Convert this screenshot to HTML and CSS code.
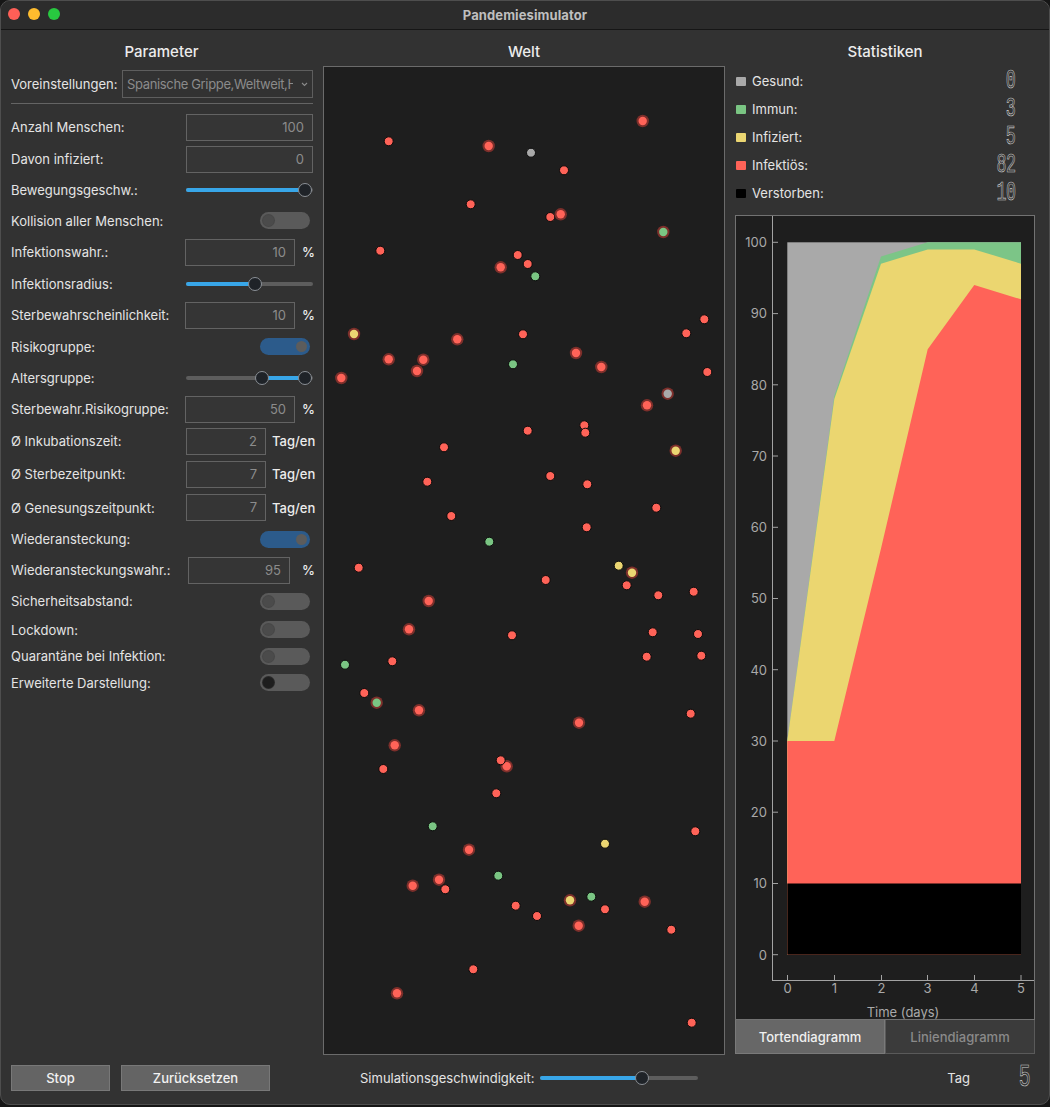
FILE: index.html
```html
<!DOCTYPE html>
<html lang="de">
<head>
<meta charset="utf-8">
<title>Pandemiesimulator</title>
<link rel="stylesheet" href="styles.css">
</head>
<body>
<div class="window">
  <div class="titlebar">
    <div class="lights"><span class="light l-red"></span><span class="light l-yellow"></span><span class="light l-green"></span></div>
    <div class="title">Pandemiesimulator</div>
  </div>
  <div class="main">
    <section class="col col-left">
      <h2 class="heading">Parameter</h2>
      <div class="preset">
        <span class="label">Voreinstellungen:</span>
        <div class="combo"><span class="combo-text">Spanische Grippe,Weltweit,Hoch</span>
          <svg class="chev" width="7" height="5" viewBox="0 0 7 5"><polyline points="1,1 3.5,3.5 6,1" fill="none" stroke="#8a8a8a" stroke-width="1.1"/></svg>
        </div>
      </div>
      <div class="sep"></div>
      <div class="rows">
        <div class="row h32"><span class="label">Anzahl Menschen:</span><div class="inp w126">100</div></div>
        <div class="row h32"><span class="label">Davon infiziert:</span><div class="inp w126">0</div></div>
        <div class="row h30"><span class="label">Bewegungsgeschw.:</span>
          <div class="slider"><div class="track"></div><div class="fill fill-full"></div><div class="knob knob-full"></div></div></div>
        <div class="row h31"><span class="label">Kollision aller Menschen:</span><div class="toggle"><span class="tknob"></span></div></div>
        <div class="row h32"><span class="label">Infektionswahr.:</span><div class="grp"><div class="inp w109">10</div><span class="unit pct">%</span></div></div>
        <div class="row h31"><span class="label">Infektionsradius:</span>
          <div class="slider"><div class="track"></div><div class="fill fill-half"></div><div class="knob knob-half"></div></div></div>
        <div class="row h32"><span class="label">Sterbewahrscheinlichkeit:</span><div class="grp"><div class="inp w109">10</div><span class="unit pct">%</span></div></div>
        <div class="row h31"><span class="label">Risikogruppe:</span><div class="toggle on"><span class="tknob"></span></div></div>
        <div class="row h31"><span class="label">Altersgruppe:</span>
          <div class="slider"><div class="track"></div><div class="fill fill-range"></div><div class="knob knob-lo"></div><div class="knob knob-full"></div></div></div>
        <div class="row h32"><span class="label">Sterbewahr.Risikogruppe:</span><div class="grp"><div class="inp w109">50</div><span class="unit pct">%</span></div></div>
        <div class="row h32"><span class="label">Ø Inkubationszeit:</span><div class="grp"><div class="inp w79">2</div><span class="unit tag">Tag/en</span></div></div>
        <div class="row h34"><span class="label">Ø Sterbezeitpunkt:</span><div class="grp"><div class="inp w79">7</div><span class="unit tag">Tag/en</span></div></div>
        <div class="row h33"><span class="label">Ø Genesungszeitpunkt:</span><div class="grp"><div class="inp w79">7</div><span class="unit tag">Tag/en</span></div></div>
        <div class="row h30"><span class="label">Wiederansteckung:</span><div class="toggle on"><span class="tknob"></span></div></div>
        <div class="row h32"><span class="label">Wiederansteckungswahr.:</span><div class="grp"><div class="inp w101">95</div><span class="unit pct wide">%</span></div></div>
        <div class="row h30"><span class="label">Sicherheitsabstand:</span><div class="toggle"><span class="tknob"></span></div></div>
        <div class="row h27"><span class="label">Lockdown:</span><div class="toggle"><span class="tknob"></span></div></div>
        <div class="row h26"><span class="label">Quarantäne bei Infektion:</span><div class="toggle"><span class="tknob"></span></div></div>
        <div class="row h27"><span class="label">Erweiterte Darstellung:</span><div class="toggle"><span class="tknob dark"></span></div></div>
      </div>
    </section>

    <section class="col col-mid">
      <h2 class="heading">Welt</h2>
      <div class="world">
        <svg width="400" height="987" viewBox="0 0 400 987">
          <circle class="halo" cx="318.7" cy="54" r="6.2"/><circle class="cr in" cx="318.7" cy="54" r="4.2"/>
          <circle class="cr" cx="64.7" cy="74.3" r="4.5"/>
          <circle class="halo" cx="164.7" cy="79" r="6.2"/><circle class="cr in" cx="164.7" cy="79" r="4.2"/>
          <circle class="cx" cx="207" cy="85.7" r="4.5"/>
          <circle class="cr" cx="240" cy="103.3" r="4.5"/>
          <circle class="cr" cx="146.7" cy="137.3" r="4.5"/>
          <circle class="cr" cx="226.3" cy="150" r="4.5"/>
          <circle class="halo" cx="236.7" cy="147.3" r="6.2"/><circle class="cr in" cx="236.7" cy="147.3" r="4.2"/>
          <circle class="halo" cx="339.3" cy="165" r="6.2"/><circle class="cg in" cx="339.3" cy="165" r="4.2"/>
          <circle class="cr" cx="56.3" cy="183.7" r="4.5"/>
          <circle class="cr" cx="193.7" cy="188" r="4.5"/>
          <circle class="halo" cx="176.7" cy="200.3" r="6.2"/><circle class="cr in" cx="176.7" cy="200.3" r="4.2"/>
          <circle class="cr" cx="203.7" cy="197" r="4.5"/>
          <circle class="cg" cx="211.3" cy="209.3" r="4.5"/>
          <circle class="cr" cx="380.3" cy="252.3" r="4.5"/>
          <circle class="cr" cx="362.3" cy="266.3" r="4.5"/>
          <circle class="halo" cx="30" cy="267" r="6.2"/><circle class="cy in" cx="30" cy="267" r="4.2"/>
          <circle class="halo" cx="133.3" cy="272.3" r="6.2"/><circle class="cr in" cx="133.3" cy="272.3" r="4.2"/>
          <circle class="cr" cx="199" cy="267.3" r="4.5"/>
          <circle class="halo" cx="64.7" cy="292.3" r="6.2"/><circle class="cr in" cx="64.7" cy="292.3" r="4.2"/>
          <circle class="halo" cx="99.3" cy="292.7" r="6.2"/><circle class="cr in" cx="99.3" cy="292.7" r="4.2"/>
          <circle class="halo" cx="93" cy="304" r="6.2"/><circle class="cr in" cx="93" cy="304" r="4.2"/>
          <circle class="cg" cx="189" cy="297.3" r="4.5"/>
          <circle class="halo" cx="252" cy="286" r="6.2"/><circle class="cr in" cx="252" cy="286" r="4.2"/>
          <circle class="halo" cx="277.3" cy="300" r="6.2"/><circle class="cr in" cx="277.3" cy="300" r="4.2"/>
          <circle class="cr" cx="383.3" cy="305" r="4.5"/>
          <circle class="halo" cx="17.3" cy="311" r="6.2"/><circle class="cr in" cx="17.3" cy="311" r="4.2"/>
          <circle class="halo" cx="343.7" cy="326.7" r="6.2"/><circle class="cx in" cx="343.7" cy="326.7" r="4.2"/>

          <circle class="halo" cx="323" cy="338.3" r="6.2"/><circle class="cr in" cx="323" cy="338.3" r="4.2"/>
          <circle class="cr" cx="203.7" cy="363.7" r="4.5"/>
          <circle class="cr" cx="260.3" cy="358.3" r="4.5"/>
          <circle class="cr" cx="261.3" cy="365.7" r="4.5"/>
          <circle class="halo" cx="351.7" cy="383.7" r="6.2"/><circle class="cy in" cx="351.7" cy="383.7" r="4.2"/>
          <circle class="cr" cx="120" cy="380.3" r="4.5"/>
          <circle class="cr" cx="103.3" cy="414.7" r="4.5"/>
          <circle class="cr" cx="226.3" cy="409" r="4.5"/>
          <circle class="cr" cx="263.3" cy="417.3" r="4.5"/>
          <circle class="cr" cx="332.3" cy="440.7" r="4.5"/>
          <circle class="cr" cx="127.3" cy="449" r="4.5"/>
          <circle class="cr" cx="262.7" cy="460.3" r="4.5"/>
          <circle class="cg" cx="165.3" cy="474.7" r="4.5"/>
          <circle class="cr" cx="34.7" cy="500.7" r="4.5"/>
          <circle class="cy" cx="294.7" cy="498.7" r="4.5"/>
          <circle class="halo" cx="308" cy="505.7" r="6.2"/><circle class="cy in" cx="308" cy="505.7" r="4.2"/>
          <circle class="cr" cx="221.7" cy="513" r="4.5"/>
          <circle class="cr" cx="302.7" cy="518.3" r="4.5"/>
          <circle class="cr" cx="334.3" cy="528.3" r="4.5"/>
          <circle class="cr" cx="369.7" cy="524.7" r="4.5"/>
          <circle class="halo" cx="104.7" cy="534" r="6.2"/><circle class="cr in" cx="104.7" cy="534" r="4.2"/>
          <circle class="halo" cx="85" cy="562.3" r="6.2"/><circle class="cr in" cx="85" cy="562.3" r="4.2"/>
          <circle class="cr" cx="188" cy="568.3" r="4.5"/>
          <circle class="cr" cx="328.7" cy="565.3" r="4.5"/>
          <circle class="cr" cx="374" cy="567" r="4.5"/>
          <circle class="cr" cx="322.7" cy="589.7" r="4.5"/>
          <circle class="cr" cx="377.3" cy="588.7" r="4.5"/>
          <circle class="cg" cx="21" cy="597.7" r="4.5"/>
          <circle class="cr" cx="68.3" cy="594.3" r="4.5"/>
          <circle class="cr" cx="40.3" cy="626" r="4.5"/>
          <circle class="halo" cx="52.7" cy="635.7" r="6.2"/><circle class="cg in" cx="52.7" cy="635.7" r="4.2"/>
          <circle class="halo" cx="95" cy="643.3" r="6.2"/><circle class="cr in" cx="95" cy="643.3" r="4.2"/>
          <circle class="cr" cx="366.7" cy="646.7" r="4.5"/>
          <circle class="halo" cx="255" cy="655.7" r="6.2"/><circle class="cr in" cx="255" cy="655.7" r="4.2"/>

          <circle class="halo" cx="70.7" cy="678.3" r="6.2"/><circle class="cr in" cx="70.7" cy="678.3" r="4.2"/>
          <circle class="cr" cx="59.3" cy="702" r="4.5"/>
          <circle class="halo" cx="182.7" cy="699.3" r="6.2"/><circle class="cr in" cx="182.7" cy="699.3" r="4.2"/>
          <circle class="cr" cx="176.7" cy="693.3" r="4.5"/>
          <circle class="cr" cx="172.3" cy="726.3" r="4.5"/>
          <circle class="cg" cx="108.7" cy="759.3" r="4.5"/>
          <circle class="cr" cx="371.3" cy="764.3" r="4.5"/>
          <circle class="cy" cx="281" cy="776.7" r="4.5"/>
          <circle class="halo" cx="145" cy="782.7" r="6.2"/><circle class="cr in" cx="145" cy="782.7" r="4.2"/>
          <circle class="cg" cx="174.3" cy="808.7" r="4.5"/>
          <circle class="halo" cx="88.7" cy="818.7" r="6.2"/><circle class="cr in" cx="88.7" cy="818.7" r="4.2"/>
          <circle class="halo" cx="115" cy="812.7" r="6.2"/><circle class="cr in" cx="115" cy="812.7" r="4.2"/>
          <circle class="cr" cx="121.3" cy="822.3" r="4.5"/>
          <circle class="cr" cx="191.7" cy="838.7" r="4.5"/>
          <circle class="cr" cx="213" cy="849" r="4.5"/>
          <circle class="halo" cx="246" cy="833.3" r="6.2"/><circle class="cy in" cx="246" cy="833.3" r="4.2"/>
          <circle class="cg" cx="267.3" cy="829.7" r="4.5"/>
          <circle class="cr" cx="281" cy="842.3" r="4.5"/>
          <circle class="halo" cx="320.7" cy="834.7" r="6.2"/><circle class="cr in" cx="320.7" cy="834.7" r="4.2"/>
          <circle class="halo" cx="254.7" cy="858.7" r="6.2"/><circle class="cr in" cx="254.7" cy="858.7" r="4.2"/>
          <circle class="cr" cx="347.3" cy="862.7" r="4.5"/>
          <circle class="cr" cx="149.3" cy="902.3" r="4.5"/>
          <circle class="halo" cx="73" cy="926.3" r="6.2"/><circle class="cr in" cx="73" cy="926.3" r="4.2"/>
          <circle class="cr" cx="367.7" cy="955.7" r="4.5"/>
        </svg>
      </div>
    </section>

    <section class="col col-right">
      <h2 class="heading">Statistiken</h2>
      <ul class="legend">
        <li><span class="sq sq-gray"></span><span class="label">Gesund:</span><span class="lcd">0</span></li>
        <li><span class="sq sq-green"></span><span class="label">Immun:</span><span class="lcd">3</span></li>
        <li><span class="sq sq-yellow"></span><span class="label">Infiziert:</span><span class="lcd">5</span></li>
        <li><span class="sq sq-red"></span><span class="label">Infektiös:</span><span class="lcd">82</span></li>
        <li><span class="sq sq-black"></span><span class="label">Verstorben:</span><span class="lcd">10</span></li>
      </ul>
      <div class="chart">
        <svg width="298" height="803" viewBox="736 216 298 803">
          <rect class="a-gray" x="787.3" y="242.3" width="233.7" height="712.4"/>
          <polygon class="a-green" points="787.3,954.7 787.3,741 834.3,396.2 881,256.5 927.7,242.3 974.3,242.3 1021,242.3 1021,954.7"/>
          <polygon class="a-yellow" points="787.3,954.7 787.3,741 834.3,399 881,263.7 927.7,249.4 974.3,249.4 1021,263.7 1021,954.7"/>
          <polygon class="a-red" points="787.3,954.7 787.3,741 834.3,741 881,548.6 927.7,349.2 974.3,285 1021,299.3 1021,954.7"/>
          <rect class="a-black" x="787.3" y="883.5" width="233.7" height="71.2"/>
          <g class="axis">
            <line x1="772.5" y1="216" x2="772.5" y2="980.5"/>
            <line x1="772" y1="980.5" x2="1034" y2="980.5"/>
            <line x1="772" y1="954.7" x2="778" y2="954.7"/>
            <line x1="772" y1="883.5" x2="778" y2="883.5"/>
            <line x1="772" y1="812.2" x2="778" y2="812.2"/>
            <line x1="772" y1="741" x2="778" y2="741"/>
            <line x1="772" y1="669.7" x2="778" y2="669.7"/>
            <line x1="772" y1="598.5" x2="778" y2="598.5"/>
            <line x1="772" y1="527.3" x2="778" y2="527.3"/>
            <line x1="772" y1="456" x2="778" y2="456"/>
            <line x1="772" y1="384.8" x2="778" y2="384.8"/>
            <line x1="772" y1="313.6" x2="778" y2="313.6"/>
            <line x1="772" y1="242.3" x2="778" y2="242.3"/>
            <line x1="787.5" y1="975" x2="787.5" y2="980"/>
            <line x1="834.5" y1="975" x2="834.5" y2="980"/>
            <line x1="881.5" y1="975" x2="881.5" y2="980"/>
            <line x1="927.5" y1="975" x2="927.5" y2="980"/>
            <line x1="974.5" y1="975" x2="974.5" y2="980"/>
            <line x1="1021" y1="975" x2="1021" y2="980"/>
          </g>
          <g class="ticklabels ylab">
            <text x="767" y="959.5">0</text>
            <text x="767" y="888.3">10</text>
            <text x="767" y="817">20</text>
            <text x="767" y="745.8">30</text>
            <text x="767" y="674.5">40</text>
            <text x="767" y="603.3">50</text>
            <text x="767" y="532.1">60</text>
            <text x="767" y="460.8">70</text>
            <text x="767" y="389.6">80</text>
            <text x="767" y="318.4">90</text>
            <text x="767" y="247.1">100</text>
          </g>
          <g class="ticklabels xlab">
            <text x="787.5" y="993">0</text>
            <text x="834.5" y="993">1</text>
            <text x="881.5" y="993">2</text>
            <text x="927.5" y="993">3</text>
            <text x="974.5" y="993">4</text>
            <text x="1021" y="993">5</text>
            <text x="903" y="1016.5">Time (days)</text>
          </g>
        </svg>
      </div>
      <div class="tabs">
        <div class="tab active">Tortendiagramm</div>
        <div class="tab">Liniendiagramm</div>
      </div>
    </section>
  </div>

  <div class="bottombar">
    <button class="btn btn-stop">Stop</button>
    <button class="btn btn-reset">Zurücksetzen</button>
    <span class="label simlabel">Simulationsgeschwindigkeit:</span>
    <div class="slider simslider"><div class="track"></div><div class="fill fill-sim"></div><div class="knob knob-sim"></div></div>
    <span class="label taglabel">Tag</span>
    <span class="lcd lcd-big">5</span>
  </div>
</div>
</body>
</html>
```

FILE: styles.css
```css
* { box-sizing: border-box; }
html, body { margin: 0; padding: 0; }
body {
  background: #161616;
  font-family: Inter, "Noto Sans", "DejaVu Sans", sans-serif;
  font-size: 13px;
  color: #e2e2e2;
  width: 1050px;
  height: 1107px;
  overflow: hidden;
}
.window {
  width: 1050px;
  height: 1105px;
  background: #323232;
  border: 1px solid #4e4e4e;
  border-radius: 10px;
  overflow: hidden;
  display: flex;
  flex-direction: column;
}
.titlebar {
  height: 29px;
  flex: none;
  background: #2c2c2c;
  border-bottom: 1px solid #161616;
  position: relative;
  display: flex;
  align-items: center;
  justify-content: center;
}
.lights {
  position: absolute;
  left: 7px;
  top: 7px;
  display: flex;
  gap: 8px;
}
.light { width: 12px; height: 12px; border-radius: 50%; display: block; }
.l-red { background: #fe5f57; }
.l-yellow { background: #febc2e; }
.l-green { background: #28c840; }
.title {
  font-weight: 700;
  font-size: 13px;
  color: #bfbfbf;
  letter-spacing: 0.1px;
}
.main {
  flex: none;
  height: 1024px;
  display: flex;
  padding-left: 9px;
  gap: 10px;
}
.col { display: flex; flex-direction: column; }
.col-left { width: 303px; }
.col-mid { width: 402px; }
.col-right { width: 300px; }
.heading {
  margin: 9px 0 1px;
  height: 26px;
  line-height: 26px;
  font-size: 15px;
  font-weight: 500;
  text-align: center;
  color: #ececec;
}
.label { color: #e4e4e4; white-space: nowrap; }

/* left panel */
.preset {
  margin-top: 4px;
  height: 28px;
  display: flex;
  align-items: center;
  padding-left: 1px;
}
.combo {
  margin-left: auto;
  width: 191px;
  height: 28px;
  border: 1px solid #5e5e5e;
  display: flex;
  align-items: center;
  padding-left: 4px;
  position: relative;
}
.combo-text {
  width: 166px;
  overflow: hidden;
  white-space: nowrap;
  color: #8b8b8b;
  letter-spacing: -0.35px;
}
.chev { position: absolute; right: 4px; top: 11px; }
.sep {
  margin: 5px 0 0 1px;
  height: 1px;
  background: #646464;
}
.rows { margin-top: 7px; display: flex; flex-direction: column; }
.row {
  display: flex;
  align-items: center;
  justify-content: space-between;
  padding-left: 1px;
}
.h26 { height: 26px; }
.h27 { height: 27px; }
.h30 { height: 30px; }
.h31 { height: 31px; }
.h32 { height: 32px; }
.h33 { height: 33px; }
.h34 { height: 34px; }
.inp {
  height: 27px;
  border: 1px solid #636363;
  background: #353535;
  color: #8c8c8c;
  text-align: right;
  padding-right: 8px;
  line-height: 25px;
}
.w126 { width: 127px; }
.w109 { width: 110px; }
.w101 { width: 102px; }
.w79 { width: 80px; }
.grp { display: flex; align-items: center; }
.unit { color: #ececec; font-weight: 500; }
.pct { margin-left: 7px; width: 11px; }
.pct.wide { margin-left: 12px; }
.tag { margin-left: 6px; width: 41px; }

.slider { position: relative; width: 127px; height: 16px; }
.track {
  position: absolute; left: 0; right: 0; top: 6px;
  height: 4px; border-radius: 2px; background: #5d5d5d;
}
.fill {
  position: absolute; top: 6px; height: 4px; border-radius: 2px; background: #38a6e8;
}
.fill-full { left: 0; right: 4px; }
.fill-half { left: 0; width: 66px; }
.fill-range { left: 76px; width: 45px; border-radius: 0; }
.knob {
  position: absolute; top: 1px;
  width: 14px; height: 14px; border-radius: 50%;
  background: #1f2328;
  border: 1px solid #8b9096;
}
.knob-full { left: 112px; }
.knob-half { left: 62px; }
.knob-lo { left: 69px; }

.toggle {
  width: 50px; height: 17px; border-radius: 9px;
  background: #5a5a5a;
  margin-right: 3px;
  position: relative;
}
.tknob {
  position: absolute; top: 3px; left: 3px;
  width: 11px; height: 11px; border-radius: 50%;
  background: #4b4b4b;
  box-shadow: 0 0 0 1px #474747;
}
.toggle.on { background: #2c5b8b; }
.toggle.on .tknob { left: auto; right: 3px; background: #5c5c5c; box-shadow: none; }
.tknob.dark { background: #1e1e1e; box-shadow: 0 0 0 1px #2a2a2a; }

/* world */
.world {
  width: 402px;
  height: 989px;
  border: 1px solid #6b6b6b;
  background: #1e1e1e;
}
.world svg { display: block; }
.world circle { stroke: #0a0a0a; stroke-width: 1; }
.world .halo { fill: #7d2f2b; stroke: none; }
.world .in { stroke: none; }
.cr { fill: #ff6358; }
.cg { fill: #7ac583; }
.cy { fill: #ebd672; }
.cx { fill: #a9a9a9; }

/* right panel */
.legend {
  list-style: none;
  margin: 1px 0 0;
  padding: 0 20px 0 1px;
}
.legend li {
  height: 28px;
  display: flex;
  align-items: center;
}
.sq { width: 10px; height: 9px; border-radius: 1px; margin-right: 6px; }
.sq-gray { background: #a9a9a9; }
.sq-green { background: #7ac583; }
.sq-yellow { background: #ebd672; }
.sq-red { background: #ff6358; }
.sq-black { background: #000; }
.lcd {
  margin-left: auto;
  font-family: "Liberation Mono", "DejaVu Sans Mono", monospace;
  font-weight: 400;
  font-size: 27px;
  line-height: 22px;
  color: transparent;
  -webkit-text-stroke: 0.7px #cdcdcd;
  transform: scaleX(0.62);
  transform-origin: right center;
  letter-spacing: -1px;
}
.chart {
  margin-top: 8px;
  width: 300px;
  height: 805px;
  border: 1px solid #727272;
  background: #1e1e1e;
}
.chart svg { display: block; }
.a-gray { fill: #a9a9a9; }
.a-green { fill: #7cc587; }
.a-yellow { fill: #ebd670; }
.a-red { fill: #ff6358; }
.a-black { fill: #000; }
.axis line { stroke: #a3a3a3; stroke-width: 1; }
.ticklabels text {
  font-family: Inter, "Noto Sans", sans-serif;
  font-size: 13px;
  fill: #a9a9a9;
}
.ylab text { text-anchor: end; }
.xlab text { text-anchor: middle; }
.tabs { display: flex; height: 34px; }
.tab {
  flex: 1;
  display: flex; align-items: center; justify-content: center;
  border: 1px solid #5a5a5a;
  border-top: none;
  background: #3b3b3b;
  color: #8a8a8a;
  font-weight: 500;
}
.tab.active { background: #676767; color: #f0f0f0; border-color: #7a7a7a; }

/* bottom bar */
.bottombar {
  flex: 1;
  display: flex;
  align-items: center;
  padding: 0 19px 2px 10px;
}
.btn {
  height: 26px;
  background: #646464;
  border: 1px solid #787878;
  color: #f2f2f2;
  font-family: inherit;
  font-size: 13px;
  font-weight: 500;
  padding: 0;
}
.btn-stop { width: 99px; }
.btn-reset { width: 149px; margin-left: 11px; }
.simlabel { margin-left: 90px; }
.simslider { width: 158px; margin-left: 6px; }
.fill-sim { left: 0; width: 100px; }
.knob-sim { left: 95px; }
.taglabel { margin-left: auto; }
.lcd-big {
  margin-left: 0;
  width: 60px;
  text-align: right;
  font-size: 32px;
  line-height: 26px;
}
```
